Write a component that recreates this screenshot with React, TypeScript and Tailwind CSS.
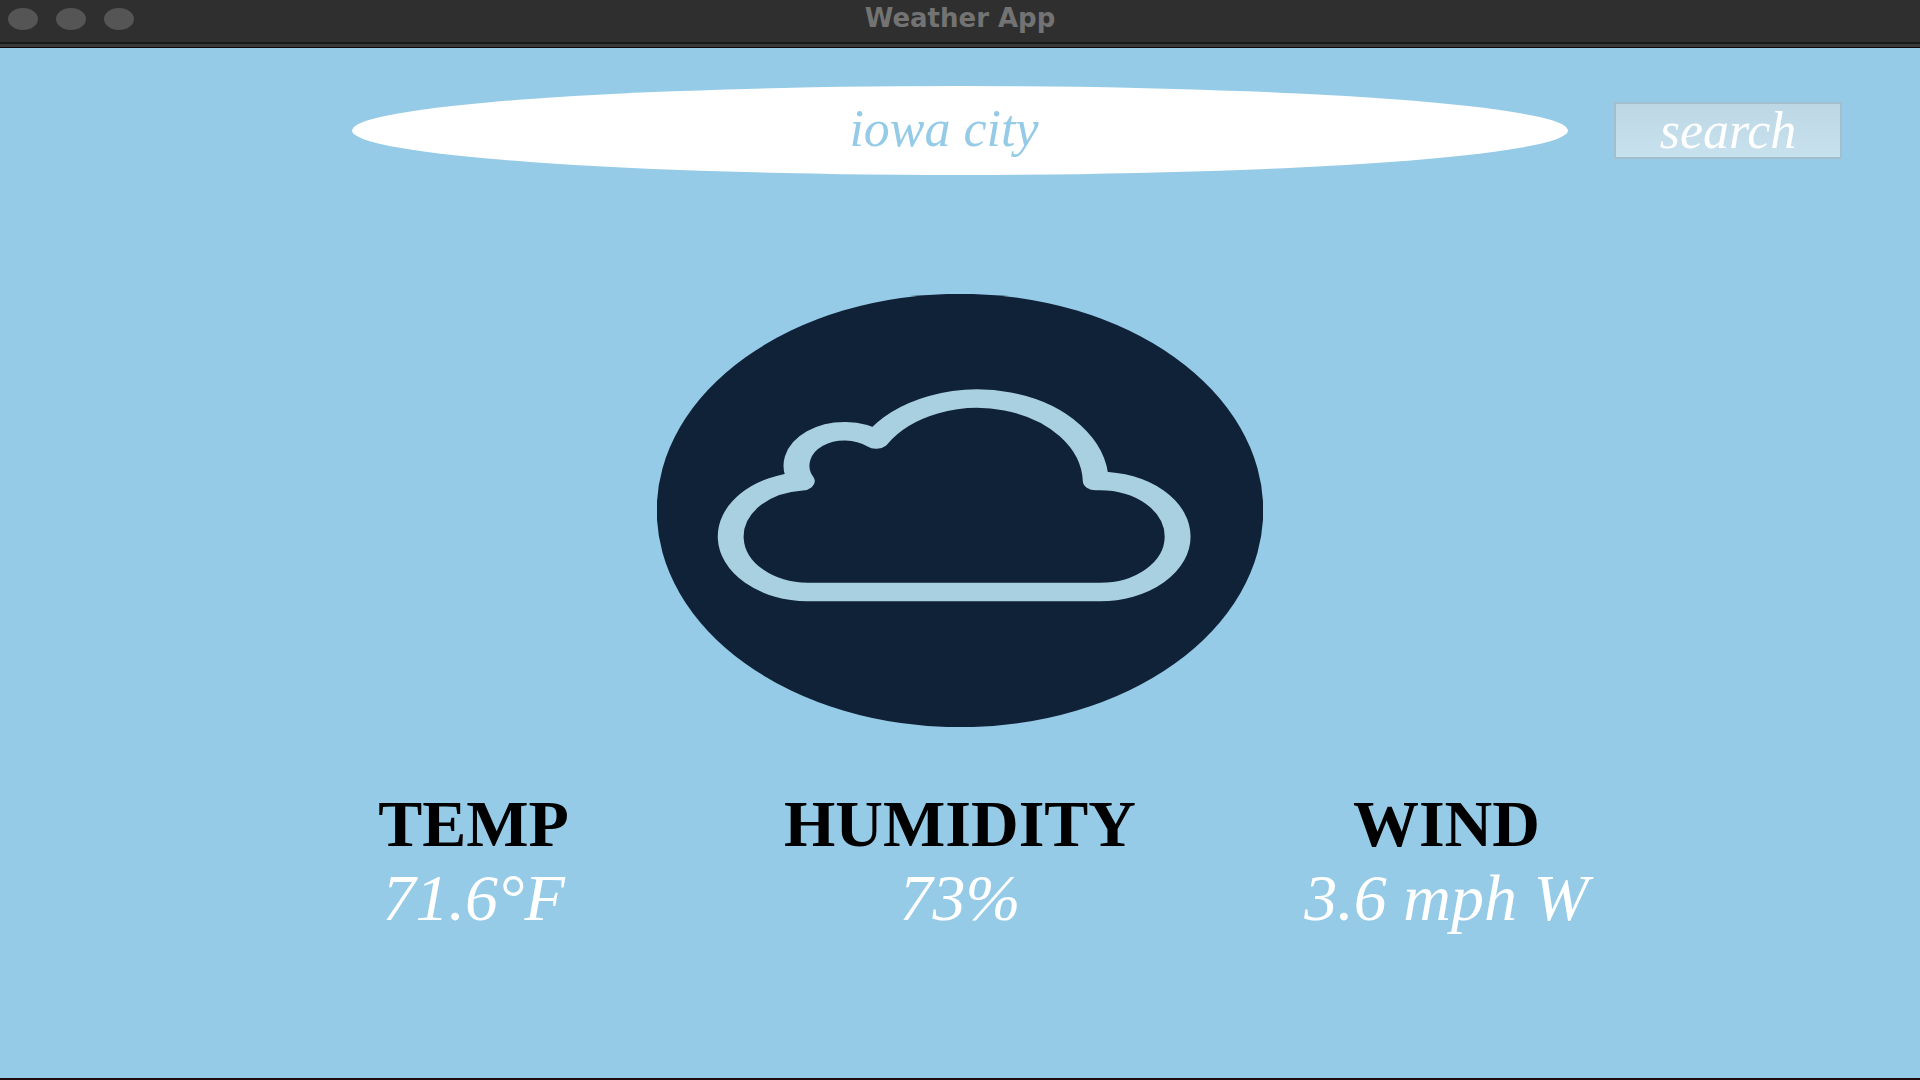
import { useState } from "react";

const stats = [
  { label: "TEMP", value: "71.6°F" },
  { label: "HUMIDITY", value: "73%" },
  { label: "WIND", value: "3.6 mph W" },
];

function TitleBar() {
  return (
    <header className="grid h-12 grid-cols-[1fr_auto_1fr] items-start border-b border-[#14060c] bg-[#2f2f2f] shadow-[inset_0_-3px_0_#383a39,inset_0_-5px_0_#191b1a]">
      <div className="flex gap-[18px] pt-2 pl-2">
        <button type="button" aria-label="Close" className="h-[22px] w-[30px] rounded-[50%] bg-[#555555]" />
        <button type="button" aria-label="Minimize" className="h-[22px] w-[30px] rounded-[50%] bg-[#555555]" />
        <button type="button" aria-label="Zoom" className="h-[22px] w-[30px] rounded-[50%] bg-[#555555]" />
      </div>
      <h1 className="font-['DejaVu_Sans',sans-serif] text-[26px] leading-9 font-bold text-[#737373]">Weather App</h1>
    </header>
  );
}

function CloudBadge() {
  return (
    <svg
      viewBox="0 0 433 433"
      preserveAspectRatio="none"
      className="h-[433px] w-[606px]"
      role="img"
      aria-label="Cloudy"
    >
      <circle cx="216.5" cy="216.5" r="216.7" fill="#102237" />
      <path
        d="M107.5 298 A55.5 55.5 0 0 1 103.5 187.2 A34.3 34.3 0 0 1 156.5 145.6 A84.6 84.6 0 0 1 313.5 187 H316.5 A55.5 55.5 0 0 1 316.5 298 Z"
        fill="none"
        stroke="#a9d0e0"
        strokeWidth="18.5"
        strokeLinejoin="round"
      />
    </svg>
  );
}

export default function App() {
  const [city, setCity] = useState("iowa city");

  return (
    <div className="flex min-h-screen flex-col border-b-2 border-[#1c0a0c] bg-[#96cbe8] font-['Liberation_Serif',serif]">
      <TitleBar />
      <form
        className="grid grid-cols-[352fr_1216fr_352fr] items-center pt-[38px]"
        onSubmit={(event) => event.preventDefault()}
      >
        <input
          type="text"
          aria-label="City"
          value={city}
          onChange={(event) => setCity(event.target.value)}
          className="col-start-2 h-[89px] w-full rounded-[50%] bg-white pr-8 pb-1 text-center text-[52px] text-[#96cbe8] italic outline-none"
        />
        <button
          type="submit"
          className="ml-[46px] h-[57px] w-[228px] border-2 border-[#a3bfce] bg-linear-to-b from-[#bdd7e5] to-[#c8e1ee] text-[52px] leading-[53px] text-white italic"
        >
          search
        </button>
      </form>
      <main className="flex flex-col items-center pt-[119px]">
        <CloudBadge />
        <dl className="mt-[60px] grid w-[76%] grid-cols-3 text-center text-[66px] leading-[74px]">
          {stats.map((stat) => (
            <div key={stat.label}>
              <dt className="font-bold text-black">{stat.label}</dt>
              <dd className="text-white italic">{stat.value}</dd>
            </div>
          ))}
        </dl>
      </main>
    </div>
  );
}
